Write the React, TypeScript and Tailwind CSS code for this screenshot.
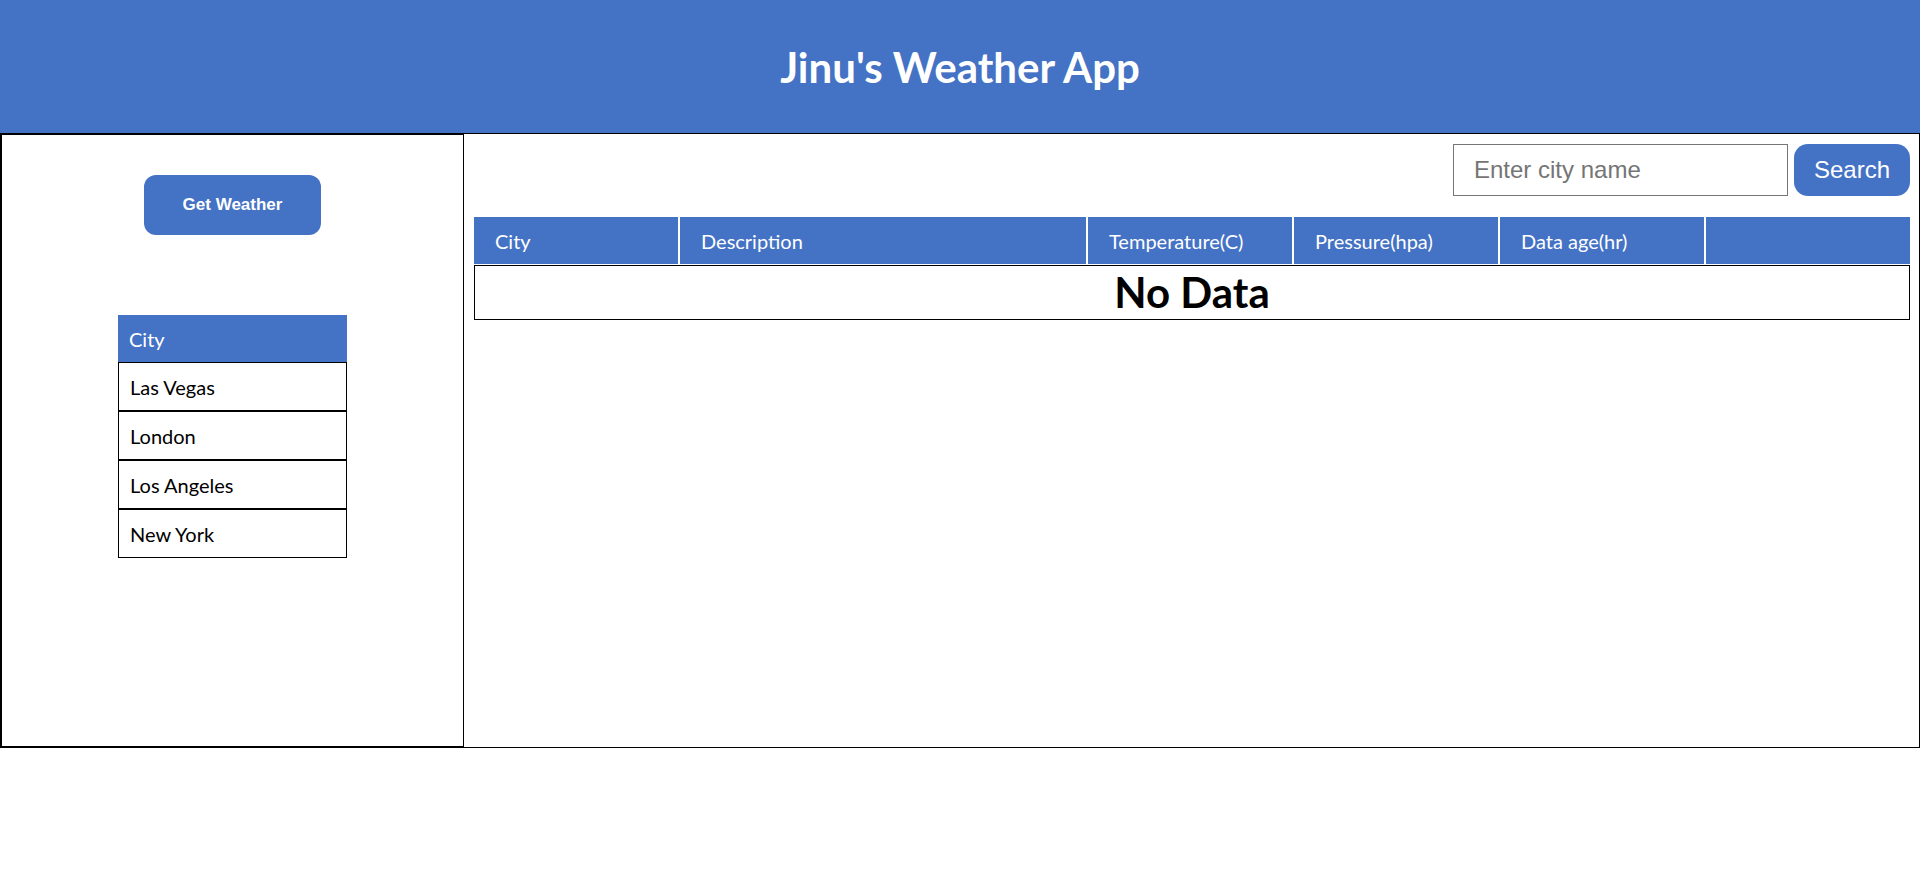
import { useState } from "react";

const cities = ["Las Vegas", "London", "Los Angeles", "New York"];

const columns = [
  "City",
  "Description",
  "Temperature(C)",
  "Pressure(hpa)",
  "Data age(hr)",
  "",
];

export default function App() {
  const [query, setQuery] = useState("");

  return (
    <div className="w-[1920px] bg-white font-['Lato','Noto_Sans',sans-serif] text-black">
      <header className="flex h-[133px] items-center justify-center bg-[#4472C4]">
        <h1 className="text-[42px] font-bold leading-none text-white">
          Jinu's Weather App
        </h1>
      </header>

      <div className="flex h-[615px]">
        {/* left panel */}
        <div className="flex w-[464px] flex-col items-center border-t-2 border-b-2 border-l-2 border-r border-black">
          <button className="mt-[40px] h-[60px] w-[177px] rounded-[12px] bg-[#4472C4] font-['Liberation_Sans',Arial,sans-serif] text-[17px] font-bold text-white">
            Get Weather
          </button>

          <div className="mt-[80px] w-[229px] text-[20px]">
            <div className="flex h-[47px] items-center bg-[#4472C4] pl-[11px] text-white">
              City
            </div>
            {cities.map((c) => (
              <div
                key={c}
                className="flex h-[49px] items-center border border-black pl-[11px]"
              >
                {c}
              </div>
            ))}
          </div>
        </div>

        {/* right panel */}
        <div className="flex flex-1 flex-col border-t border-r border-b border-black pl-[10px] pr-[9px]">
          <div className="mt-[10px] flex justify-end gap-[6px]">
            <input
              value={query}
              onChange={(e) => setQuery(e.target.value)}
              placeholder="Enter city name"
              className="h-[52px] w-[335px] border border-[#767676] pl-[20px] font-['Liberation_Sans',Arial,sans-serif] text-[24px] outline-none placeholder:text-[#757575]"
            />
            <button className="h-[52px] w-[116px] rounded-[14px] bg-[#4472C4] font-['Liberation_Sans',Arial,sans-serif] text-[24px] text-white">
              Search
            </button>
          </div>

          <div className="mt-[21px] grid grid-cols-[204px_1fr_204px_204px_204px_204px] gap-[2px] text-[20px] text-white">
            {columns.map((col, i) => (
              <div
                key={i}
                className="flex h-[47px] items-center bg-[#4472C4] pl-[21px]"
              >
                {col}
              </div>
            ))}
          </div>
          <div className="mt-px flex h-[55px] items-center justify-center border border-black text-[42px] font-bold">
            No Data
          </div>
        </div>
      </div>
    </div>
  );
}
